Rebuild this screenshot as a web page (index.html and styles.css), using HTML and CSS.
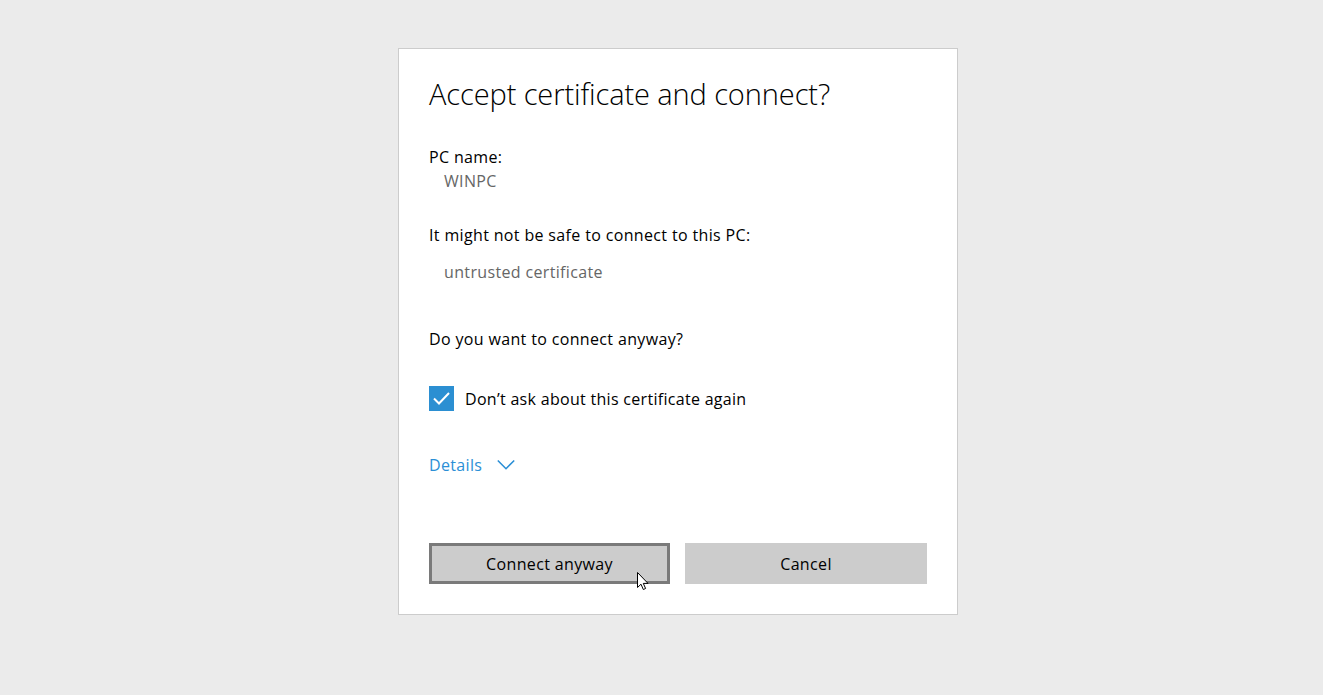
FILE: index.html
```html
<!DOCTYPE html>
<html lang="en">
<head>
    <meta charset="UTF-8">
    <title>Accept certificate and connect?</title>
    <link rel="stylesheet" href="styles.css">
</head>
<body>
    <div class="dialog">
        <h1 class="title">Accept certificate and connect?</h1>

        <p class="label pc-label">PC name:</p>
        <p class="value pc-value">WINPC</p>

        <p class="label warn-label">It might not be safe to connect to this PC:</p>
        <p class="value warn-value">untrusted certificate</p>

        <p class="label ask-label">Do you want to connect anyway?</p>

        <label class="check-row">
            <span class="checkbox">
                <svg width="25" height="25" viewBox="0 0 25 25">
                    <polyline points="5,12.5 10,17.5 20,7" fill="none" stroke="#fff" stroke-width="2"/>
                </svg>
            </span>
            <span class="check-text">Don’t ask about this certificate again</span>
        </label>

        <div class="details">
            <span>Details</span>
            <svg class="chevron" width="18" height="12" viewBox="0 0 18 12">
                <polyline points="0.8,1.5 9,9.7 17.2,1.5" fill="none" stroke="#2b8fd6" stroke-width="1.6"/>
            </svg>
        </div>

        <div class="buttons">
            <button class="btn btn-focus">Connect anyway</button>
            <button class="btn btn-cancel">Cancel</button>
            <svg class="cursor" width="14" height="20" viewBox="0 0 14 20">
                <path d="M0.5,0.5 L0.5,15.5 L4,12.2 L6.3,17.5 L8.6,16.5 L6.3,11.4 L11,11.4 Z" fill="#fff" stroke="#000" stroke-width="1"/>
            </svg>
        </div>
    </div>
</body>
</html>
```

FILE: styles.css
```css
body {
    margin: 0;
    background-color: #ebebeb;
    font-family: "Open Sans", "Noto Sans", sans-serif;
    color: #000;
    height: 695px;
    overflow: hidden;
}
.dialog {
    width: 498px;
    margin: 48px 0 0 398px;
    padding: 25px 30px 30px 30px;
    background: #fff;
    border: 1px solid #cccccc;
}
.title {
    margin: 0;
    font-size: 29px;
    font-weight: 300;
    letter-spacing: -0.1px;
    line-height: 40px;
}
p {
    margin: 0;
    font-size: 16px;
    letter-spacing: 0.35px;
    line-height: 20px;
}
.value {
    padding-left: 15px;
    color: #666;
}
.pc-label {
    margin-top: 33px;
}
.pc-value {
    margin-top: 4px;
}
.warn-label {
    margin-top: 34px;
}
.warn-value {
    margin-top: 17px;
}
.ask-label {
    margin-top: 47px;
}
.check-row {
    display: flex;
    align-items: center;
    gap: 11px;
    margin-top: 37px;
    height: 25px;
    font-size: 16px;
    letter-spacing: 0.3px;
}
.checkbox {
    width: 25px;
    height: 25px;
    background: #2b8fd2;
    display: block;
}
.checkbox svg {
    display: block;
}
.details {
    display: flex;
    align-items: center;
    gap: 15px;
    margin-top: 44px;
    height: 20px;
    font-size: 16px;
    letter-spacing: 0.35px;
    color: #2b8fd6;
}
.buttons {
    position: relative;
    display: flex;
    gap: 15px;
    margin-top: 68px;
}
.btn {
    width: 241px;
    height: 41px;
    font-family: inherit;
    font-size: 16px;
    letter-spacing: 0.35px;
    color: #000;
    background: #cccccc;
    border: none;
    padding: 0;
}
.btn-cancel {
    flex: 1;
}
.btn-focus {
    border: 3px solid #7a7a7a;
}
.cursor {
    position: absolute;
    left: 208px;
    top: 29px;
}
```
